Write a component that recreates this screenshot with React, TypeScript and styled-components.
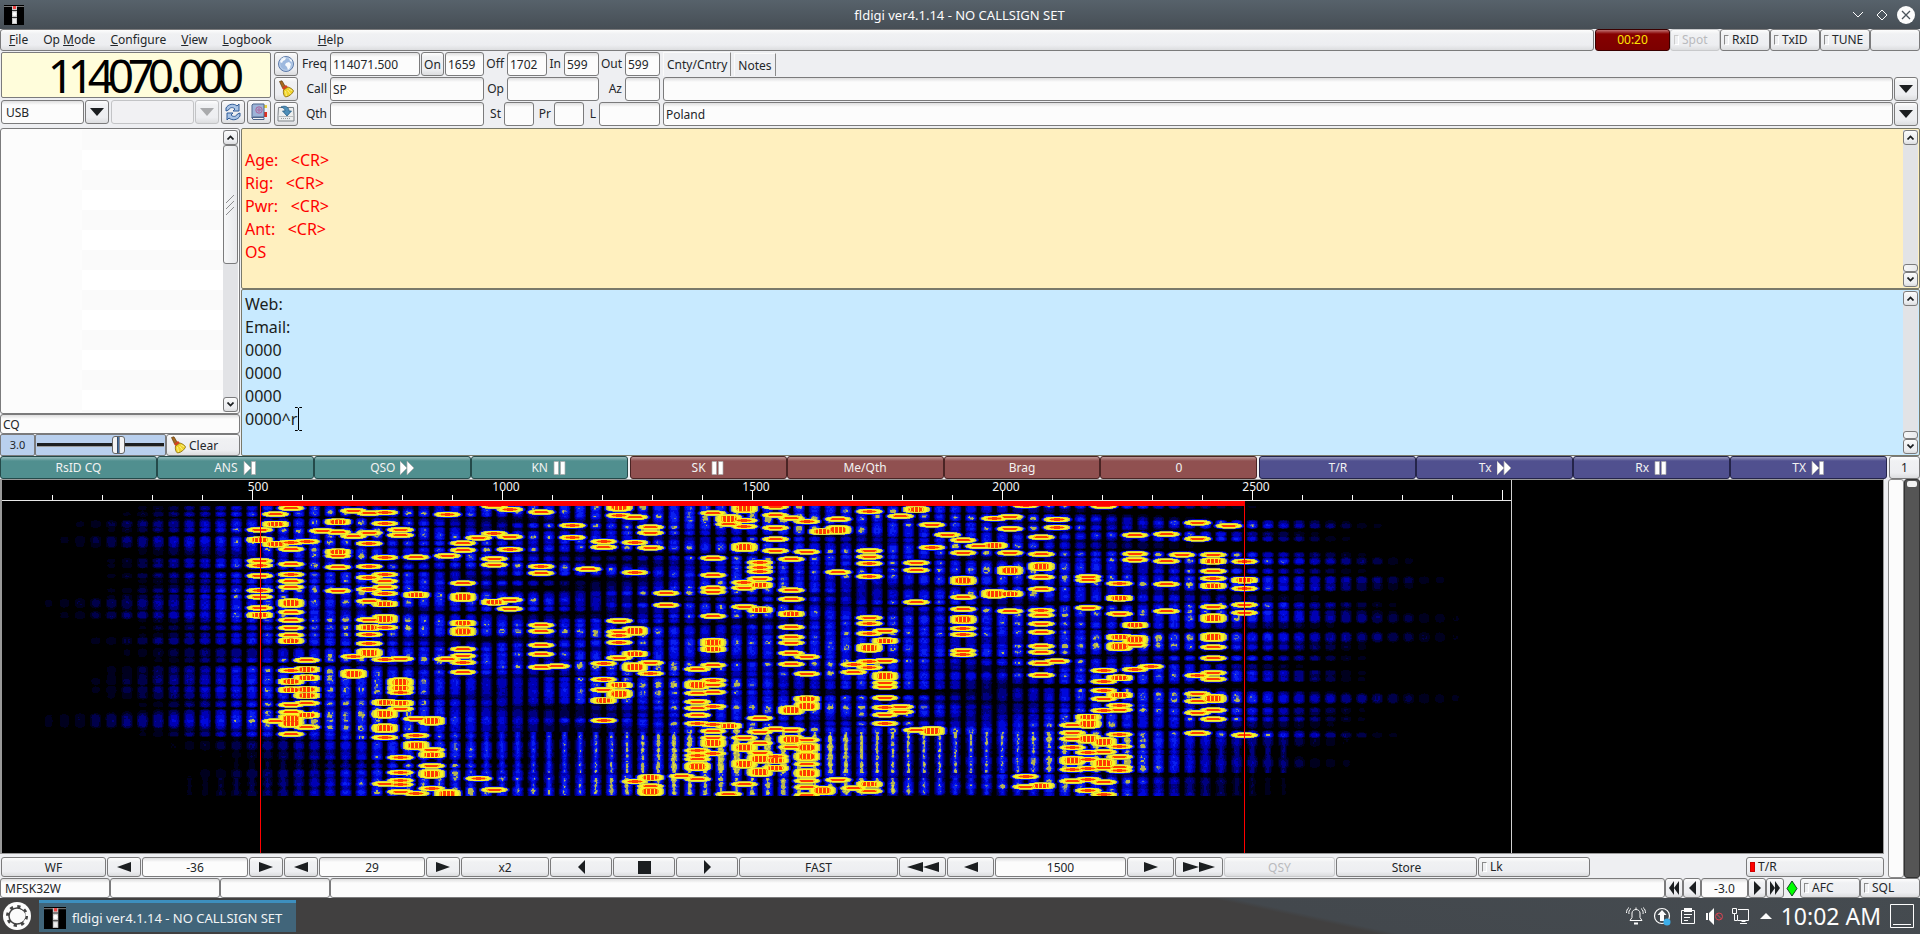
import React from "react";
import styled, { createGlobalStyle, css } from "styled-components";

const Global = createGlobalStyle`
  *, *::before, *::after { box-sizing: border-box; }
  body { margin: 0; background: #eeeff2; }
  body, button, input, select, textarea {
    font-family: "Noto Sans", "Liberation Sans", sans-serif;
    font-size: 12px;
    color: #232629;
  }
`;

/* ---------- shared looks ---------- */

const raised = css`
  border: 1px solid #7b7b7c;
  border-radius: 3px;
  background: linear-gradient(#fdfdfd, #f0f1f3 4px, #edeef1 75%, #dcdddf);
`;
const sunken = css`
  border: 1px solid #7b7b7c;
  border-radius: 3px;
  background: linear-gradient(#dededf, #fcfcfc 4px);
`;

/* ---------- window frame ---------- */

const Page = styled.div`
  display: flex;
  flex-direction: column;
  min-height: 100vh;
`;
const TitleBar = styled.header`
  display: grid;
  grid-template-columns: 1fr auto 1fr;
  align-items: center;
  height: 29px;
  padding: 0 5px 0 4px;
  color: #fcfcfc;
  background: linear-gradient(#57626b, #464e55);
`;
const Title = styled.h1`
  margin: 0;
  font-size: 13px;
  font-weight: 400;
`;
const WindowButtons = styled.div`
  display: flex;
  justify-content: flex-end;
  gap: 6px;
`;
const FrameButton = styled.button`
  display: flex;
  width: 18px;
  height: 18px;
  padding: 0;
  border: 0;
  background: none;
`;

/* ---------- menu ---------- */

const MenuRow = styled.div`
  display: flex;
  height: 22px;
`;
const MenuBar = styled.nav`
  ${raised}
  flex: 1;
  display: flex;
  align-items: center;
  gap: 15px;
  padding: 0 8px;
`;
const MenuItem = styled.button<{ $apart?: boolean }>`
  padding: 0;
  border: 0;
  background: none;
  line-height: 18px;
  margin-left: ${(p) => (p.$apart ? 31 : 0)}px;
`;
const Timer = styled.output`
  width: 75px;
  margin: 0 0 0 1px;
  border: 1px solid #3a0000;
  border-radius: 3px;
  background: linear-gradient(#c07070, #860000 4px, #7c0000);
  color: #ffe500;
  line-height: 20px;
  text-align: center;
`;
const LightLabel = styled.label<{ $width: number; $off?: boolean }>`
  ${raised}
  width: ${(p) => p.$width}px;
  display: flex;
  align-items: center;
  gap: 3px;
  padding: 0 3px;
  line-height: 18px;
  ${(p) => p.$off && css`border-color: #c8c9cb; color: #b9babd;`}
`;
const Light = styled.input`
  appearance: none;
  width: 5px;
  height: 10px;
  margin: 0;
  border: 1px solid #fff;
  border-top-color: #8a8a8a;
  border-left-color: #8a8a8a;
  &:checked { background: #f00; border-color: #c00; }
  &:disabled { border-top-color: #ccc; border-left-color: #ccc; }
`;
const Blank = styled.div`
  ${raised}
  width: 50px;
`;

/* ---------- logging panel ---------- */

const LogPanel = styled.section`
  display: flex;
  gap: 3px;
  height: 77px;
  padding: 1px 2px 0 1px;
`;
const Rig = styled.div`
  display: flex;
  flex-direction: column;
  gap: 2px;
  width: 270px;
`;
const Dial = styled.div`
  display: flex;
  justify-content: flex-end;
  align-items: center;
  height: 46px;
  padding-right: 29px;
  border: 1px solid #7b7b7c;
  border-radius: 2px;
  background: #fffddb;
`;
const Digit = styled.span<{ $point?: boolean }>`
  display: flex;
  justify-content: center;
  width: ${(p) => (p.$point ? 10 : 20)}px;
  font-size: 46px;
  line-height: 44px;
  color: #000;
`;
const RigRow = styled.div`
  display: flex;
  gap: 2px;
  height: 24px;
`;
const Combo = styled.div<{ $grow?: boolean }>`
  display: flex;
  flex: none;
  gap: 1px;
  height: 24px;
  ${(p) => !p.$grow && css`width: 108px;`}
`;
const ComboSelect = styled.select`
  ${sunken}
  appearance: none;
  flex: 1;
  min-width: 0;
  padding: 0 4px;
  &:disabled { background: #f1f1f3; border-color: #c3c4c6; opacity: 1; }
`;
const Square = styled.button`
  ${raised}
  display: flex;
  align-items: center;
  justify-content: center;
  flex: none;
  width: 24px;
  height: 24px;
  padding: 0;
  &:disabled { border-color: #c3c4c6; }
`;
const Tools = styled.div`
  display: flex;
  flex-direction: column;
  gap: 1px;
`;
const Fields = styled.div`
  display: flex;
  flex-direction: column;
  gap: 1px;
  width: 359px;
`;
const FieldRow = styled.div`
  display: flex;
  height: 24px;
`;
const FieldLabel = styled.label<{ $width: number }>`
  width: ${(p) => p.$width}px;
  padding-right: 3px;
  line-height: 24px;
  text-align: right;
`;
const Field = styled.input<{ $width: number }>`
  ${sunken}
  width: ${(p) => p.$width}px;
  height: 24px;
  padding: 0 2px;
`;
const OnButton = styled.button`
  ${raised}
  width: 23px;
  height: 24px;
  margin: 0 1px;
  padding: 0;
`;
const Places = styled.div`
  flex: 1;
  display: flex;
  flex-direction: column;
  gap: 1px;
`;
const Tabs = styled.div`
  display: flex;
  gap: 3px;
  height: 24px;
`;
const Tab = styled.button<{ $active?: boolean }>`
  padding: 0 3px;
  border: 0;
  border-right: 1px solid #8a8a8a;
  border-top: 1px solid #fafafa;
  border-left: 1px solid #fafafa;
  background: #eeeff2;
  margin-top: ${(p) => (p.$active ? 0 : 1)}px;
`;
const GrowInput = styled.input`
  ${sunken}
  flex: 1;
  min-width: 0;
  padding: 0 2px;
`;

/* ---------- text panels ---------- */

const Main = styled.main`
  display: flex;
  height: 328px;
  gap: 1px;
`;
const Side = styled.aside`
  display: flex;
  flex-direction: column;
  width: 240px;
`;
const Browser = styled.div`
  flex: 1;
  display: flex;
  padding: 1px;
  border: 1px solid #7b7b7c;
  border-radius: 3px;
  background: #fcfcfc;
`;
const ChannelKeys = styled.div`
  width: 80px;
`;
const Channels = styled.div`
  flex: 1;
  background: repeating-linear-gradient(#fafafa 0 20px, #fff 20px 40px);
`;
const Bar = styled.div`
  display: flex;
  flex-direction: column;
  width: 15px;
  background: #e2e3e6;
`;
const BarButton = styled.button`
  ${raised}
  display: flex;
  align-items: center;
  justify-content: center;
  height: 15px;
  padding: 0;
`;
const Track = styled.div<{ $end?: boolean }>`
  flex: 1;
  display: flex;
  flex-direction: column;
  justify-content: ${(p) => (p.$end ? "flex-end" : "flex-start")};
`;
const Thumb = styled.div<{ $height: number }>`
  ${raised}
  height: ${(p) => p.$height}px;
  display: flex;
  align-items: center;
  justify-content: center;
  background: linear-gradient(90deg, #f6f7f8, #e8e9ec);
`;
const Search = styled.input`
  ${sunken}
  height: 20px;
  padding: 0 2px;
`;
const SquelchRow = styled.div`
  display: flex;
  height: 22px;
`;
const Squelch = styled.output`
  width: 35px;
  border: 1px solid #7b7b7c;
  border-radius: 2px;
  background: #b9d0ee;
  font-size: 11px;
  line-height: 20px;
  text-align: center;
`;
const SquelchSlider = styled.input`
  appearance: none;
  width: 131px;
  margin: 0;
  padding: 0 1px;
  border: 1px solid #7b7b7c;
  border-radius: 2px;
  background: #b9d0ee;
  &::-webkit-slider-runnable-track {
    height: 4px;
    background: linear-gradient(#1c1e20 3px, #9a9a9a 3px);
  }
  &::-webkit-slider-thumb {
    appearance: none;
    width: 13px;
    height: 18px;
    margin-top: -7px;
    border: 1px solid #666;
    border-radius: 3px;
    background: linear-gradient(90deg, #f4f4f4 4px, #223 4px, #48729f 5px, #48729f 6px, #223 6px, #f4f4f4 7px);
  }
`;
const ClearButton = styled.button`
  ${raised}
  flex: 1;
  display: flex;
  align-items: center;
  gap: 2px;
  padding: 0 2px;
`;
const Panes = styled.div`
  flex: 1;
  display: flex;
  flex-direction: column;
`;
const Pane = styled.div<{ $tx?: boolean }>`
  flex: ${(p) => (p.$tx ? "1" : "none")};
  display: flex;
  height: 161px;
  padding: 1px;
  border: 1px solid #7a7a6a;
  border-radius: 2px;
  background: ${(p) => (p.$tx ? "#c8eaff" : "#fff0bf")};
`;
const PaneText = styled.textarea<{ $tx?: boolean }>`
  flex: 1;
  padding: ${(p) => (p.$tx ? 2 : 19)}px 2px 0;
  border: 0;
  outline: 0;
  resize: none;
  overflow: hidden;
  background: none;
  color: ${(p) => (p.$tx ? "#1b1e20" : "#ff0000")};
  font-size: 16px;
  line-height: 23px;
`;
const PaneBox = styled.div`
  position: relative;
  flex: 1;
  display: flex;
`;
const Caret = styled.svg`
  position: absolute;
  left: 52px;
  top: 116px;
`;

/* ---------- macros ---------- */

const MacroBar = styled.div`
  display: flex;
  gap: 2px;
  height: 23px;
`;
const MacroGroup = styled.div`
  flex: 1;
  display: flex;
`;
const Macro = styled.button<{ $tone: string; $edge: string }>`
  flex: 1;
  display: flex;
  align-items: center;
  justify-content: center;
  gap: 5px;
  padding: 0;
  border: 1px solid ${(p) => p.$edge};
  border-radius: 3px;
  background: linear-gradient(rgba(255, 255, 255, 0.4), rgba(255, 255, 255, 0) 4px), ${(p) => p.$tone};
  color: #f2f2f2;
  line-height: 20px;
`;
const MacroPage = styled.button`
  ${raised}
  width: 31px;
  padding: 0;
`;

/* ---------- waterfall ---------- */

const Lower = styled.section`
  flex: 1;
  display: flex;
`;
const Spectrum = styled.div`
  flex: 1;
  min-width: 0;
  display: flex;
  flex-direction: column;
`;
const Screen = styled.div`
  flex: 1;
  display: flex;
  min-height: 374px;
  margin-right: 4px;
  border: 1px solid #9a9a9a;
  border-width: 1px 1px 1px 2px;
  background: #000;
  overflow: hidden;
`;
const Plot = styled.svg`
  flex: 1;
  display: block;
  min-width: 0;
`;
const Level = styled.div`
  width: 16px;
  border: 1px solid #8a8a8a;
  border-radius: 3px;
  background: #fcfcfc;
`;
const Gain = styled.div`
  width: 16px;
  padding: 1px 2px;
  border: 1px solid #333;
  border-radius: 3px;
  background: #555;
`;
const GainThumb = styled.div`
  height: 6px;
  border-radius: 2px;
  background: #f2f2f2;
`;
const Controls = styled.div`
  display: flex;
  gap: 1px;
  height: 24px;
  padding: 3px 4px 1px 1px;
`;
const Ctl = styled.button<{ $width: number }>`
  ${raised}
  display: flex;
  align-items: center;
  justify-content: center;
  width: ${(p) => p.$width}px;
  padding: 0;
  &:disabled { border-color: #c8c9cb; color: #b9babd; }
`;
const Counter = styled.input<{ $width: number }>`
  ${sunken}
  width: ${(p) => p.$width}px;
  padding: 0;
  text-align: center;
`;
const Spacer = styled.div`
  flex: 1;
`;
const StatusBar = styled.footer`
  display: flex;
  height: 20px;
`;
const Status = styled.div<{ $grow?: boolean }>`
  ${sunken}
  width: 110px;
  ${(p) => p.$grow && css`flex: 1;`}
  padding: 0 4px;
  line-height: 20px;
`;
const Lamp = styled.svg`
  margin: 0 1px;
`;

/* ---------- desktop panel ---------- */

const Taskbar = styled.div`
  display: flex;
  align-items: center;
  height: 36px;
  padding: 0 6px 0 3px;
  color: #fcfcfc;
  background: linear-gradient(12deg, #414040 0 66%, #43484d 67%, #454b50);
`;
const Launcher = styled.button`
  display: flex;
  padding: 0;
  margin-right: 8px;
  border: 0;
  background: none;
`;
const Task = styled.button`
  display: flex;
  align-items: center;
  gap: 6px;
  width: 257px;
  height: 32px;
  padding: 0 5px;
  border: 0;
  border-top: 3px solid #3d8fbf;
  background: #41657a;
  color: #f2f4f5;
  font-size: 13px;
`;
const Tray = styled.div`
  display: flex;
  align-items: center;
  gap: 4px;
`;
const Clock = styled.time`
  margin: 0 9px 0 4px;
  font-size: 23px;
  line-height: 32px;
  white-space: nowrap;
`;

/* ---------- signal data ---------- */

const TONE = 15.63;
const FIRST_TONE = 257.3;

/* Per tone: burst positions down the waterfall, in thirds of a row. s = strong, b = broad. */
const BURSTS = [
  "118 148s 211 225 256 300 319 352 374s",
  "71 101s 161s 692",
  "53 156 176 221 252 272 290 338b 365 389 412 434 451s 540 573s 598s 643 665 684b 698b 731",
  "153 509 537s 562s 597s 615s 638 674s 710",
  "121",
  "94s 125 184s 196 230 301",
  "61 137 498 550b",
  "68 127 159 228 261 297 332 388 411s 432 459 487b",
  "66 99 201 252 272 290 309 340s 385b 411 507 636s 670b 713b 741 880",
  "118 134 505 575b 593s 606 638s 655 801 846 870 882 904",
  "200 313s 685 735 765b 909",
  "691b 778 793s 826 850b 894",
  "72 196 506 910b",
  "158 179 278 320b 398s 423b 476 496 516 545",
  "142 864",
  "47 129 205 223 335s 898",
  "57 139 177 328 355",
  "",
  "65 228 248 404 422 464 491 530",
  "527",
  "105 141",
  "236",
  "153 170 519 567 598 630s 690",
  "49b 75 391 424 435 456 502 584s 610b",
  "80 156 246 421b 490s 530b 873",
  "110 127 172 517 549 861s 887 903b",
  "308 344",
  "857",
  "536 583b 608 634 653 674 699 780 795 806 828b 866",
  "68 203 254 293 304 377 456b 476s 524 570 583 605 648 702 722 742 757b 789",
  "85b 101 706s 911",
  "54b 90 108 170b 276 292 349 742 771b 820b 881",
  "216 231 243 265 284s 358s 683 724 758 787 805b 845b",
  "49 74 112 146 181 716 798 810s 833s",
  "83 206 299 326 370s 410 440 457 488 521 659b 718 747b 770",
  "93 184 499 550 625s 647b 748 771b 798b 821 848b 871 890 914",
  "123s 900b",
  "86 118b 245 868",
  "522 545 893",
  "63 181 199 219 258 382 399 429 472b 513 531 881s 902",
  "421 451s 511 557b 577 589 622 651 673 699",
  "77 649 664",
  "57s 217 239 335 719",
  "103 171 721b",
  "133",
  "149 187 270b 320 356 387b 414 432 481 492",
  "167",
  "84 165s 310b",
  "79 115 187 240b 310s 362",
  "45 858 889",
  "140 191 228b 260 296 360 374 400 425 467 485 518 554 886s",
  "87 111 512",
  "704 727 745 771 810b 837 872",
  "259 269 352 680s 700b 745b 786 807 834 867 900",
  "47 540 573 600 625 660 754b 784 818b 832 875 912",
  "279 323s 370 440s 468b 562s 614s 645 658 732 768 799 830 840",
  "134 190 208 404s 447b 463 537",
  "528",
  "131 212 281 362",
  "193",
  "97 145 555 610 632 667 728",
  "193 212s 242 264 286s 349 383b 440b 470 503 547 566 624b 659 686",
  "106",
  "213 269s 294 343 367 734",
];

const PALETTE: [number, string][] = [
  [0.07, "#00001e"],
  [0.14, "#00004a"],
  [0.22, "#000080"],
  [0.31, "#0000b4"],
  [0.4, "#0008dc"],
  [0.49, "#0a20f0"],
  [0.565, "#5f6aa8"],
  [0.59, "#b4b452"],
  [0.67, "#d6d648"],
  [0.76, "#f8f424"],
  [0.91, "#ffa814"],
  [0.945, "#ff3c00"],
];

const COLS = 1505;
const ROWS = 306;
const TOP_ROW = 16;
const MIX = 5;

/* repeatable grain, 0..1 */
const grain = (a: number, b: number) => {
  const s = Math.sin(a * 12.9898 + b * 78.233) * 43758.5453;
  return s - Math.floor(s);
};

function tracePaths(): string[] {
  const main = new Float32Array(COLS * ROWS);
  const side = new Float32Array(COLS * ROWS);
  BURSTS.forEach((line, tone) => {
    const cx = FIRST_TONE + tone * TONE;
    line.split(" ").filter(Boolean).forEach((word) => {
      const at = parseInt(word, 10);
      const cy = at / 3;
      const kind = word.endsWith("b") ? 2 : word.endsWith("s") ? 1 : 0;
      const h = [2.8, 3.4, 4.8][kind];
      const hs = [3.6, 5, 6.4][kind];
      const lobes = [11, 15, 18][kind];
      const reach = lobes * TONE;
      for (let y = Math.max(0, Math.floor(cy - 9)); y < Math.min(ROWS, cy + 9); y++) {
        const dy = Math.abs(y - cy);
        for (let x = Math.max(0, Math.floor(cx - reach)); x < Math.min(COLS, cx + reach); x++) {
          const u = Math.abs(x - cx) / TONE;
          const i = y * COLS + x;
          if (u < 1) {
            const r = Math.pow(u / 0.85, 3) + Math.pow(dy / h, kind ? 4 : 2);
            let v = r < 1 ? 1 - 0.4 * r : 0.6 - 0.6 * (r - 1);
            if (kind && v > 0.94 && x % 4 === 0) v = 0.86;
            if (v > main[i]) main[i] = v;
          } else {
            const k = Math.floor(u);
            const f = Math.abs(u - k - 0.5) / 0.42;
            const d = dy / (hs * (1 - 0.3 * f));
            if (f >= 1 || d >= 1) continue;
            const peak = [0.66, 0.68, 0.7][kind] * Math.pow(1 - k / lobes, 1.15) * (0.88 + 0.16 * grain(at, k));
            const hollow = kind ? 0.14 * (1 - f) * (1 - d) : 0;
            side[i] += Math.pow(peak * (1 - f * f * f - hollow) * (1 - d * d * d), MIX);
          }
        }
      }
    });
  });
  /* keying transients: thin vertical lines between tones */
  for (let k = -6; k < 66; k++) {
    const cx = FIRST_TONE + (k + 0.5) * TONE;
    for (let y = 242; y < ROWS - 1; y++) {
      const late = y > 282;
      const far = Math.abs(k - (late ? 30 : 34)) / (late ? 38 : 39);
      if (far >= 1) continue;
      const pulse = 0.04 * Math.sin(y * 0.9) - (y > 266 && y < 271 ? 0.08 : 0) - (late ? (y < 288 ? 0.3 : 0.04) : 0);
      for (let x = Math.round(cx) - 3; x <= Math.round(cx) + 3; x++) {
        if (x < 0 || x >= COLS) continue;
        const dx = Math.abs(x - cx) / 4;
        const v = (0.65 + pulse) * (1 - far * far) * (1 - dx * dx);
        if (v > 0) side[y * COLS + x] += Math.pow(v, MIX);
      }
    }
  }
  const out: string[][] = PALETTE.map(() => []);
  const rank = (i: number, x: number, y: number) => {
    const raw = Math.min(0.7, Math.pow(side[i], 1 / MIX));
    const speckled = raw * (0.9 + 0.14 * grain(x >> 1, y >> 1));
    const v = Math.max(main[i], speckled);
    let n = -1;
    while (n + 1 < PALETTE.length && v >= PALETTE[n + 1][0]) n++;
    return n;
  };
  for (let y = TOP_ROW; y < ROWS; y++) {
    let start = 0;
    let last = -1;
    for (let x = 0; x <= COLS; x++) {
      const n = x < COLS ? rank(y * COLS + x, x, y) : -1;
      if (n !== last) {
        if (last >= 0) out[last].push(`M${start} ${y}h${x - start}v1h${start - x}z`);
        start = x;
        last = n;
      }
    }
  }
  return out.map((part) => part.join(""));
}

const TRACES = tracePaths();
const TICKS = Array.from({ length: 30 }, (_, i) => i + 1);

function Waterfall() {
  return (
    <Plot role="img" aria-label="Waterfall">
      <g transform="translate(0 10)" shapeRendering="crispEdges">
        {TRACES.map((d, i) => (
          <path key={i} d={d} fill={PALETTE[i][1]} />
        ))}
      </g>
      <g shapeRendering="crispEdges">
        {TICKS.map((t) => (
          <rect key={t} x={t * 50} y={t % 5 ? 15 : 10} width="1" height={t % 5 ? 5 : 10} fill="#fff" />
        ))}
        <rect x="0" y="20" width="1509" height="1" fill="#e8e8e8" />
        <rect x="1509" y="0" width="1" height="100%" fill="#d0d0d0" />
        <rect x="258" y="21" width="984" height="5" fill="#f00" />
        <rect x="258" y="21" width="1" height="100%" fill="#f00" />
        <rect x="1242" y="21" width="1" height="100%" fill="#f00" />
      </g>
      {[500, 1000, 1500, 2000, 2500].map((f) => (
        <text key={f} x={f / 2 + (f > 500 ? 4 : 6)} y="11" fill="#f4f4f4" fontSize="12" textAnchor="middle">
          {f}
        </text>
      ))}
    </Plot>
  );
}

/* ---------- icons ---------- */

const AppIcon = ({ size }: { size: number }) => (
  <svg width={size} height={size} viewBox="0 0 20 20">
    <rect width="20" height="20" fill="#000" />
    <path d="M0 1.5h20" stroke="#777" />
    <rect x="8" y="1" width="5" height="18" fill="#c9c9c9" />
    <rect x="9" y="1" width="3" height="3" fill="#e44" />
    <path d="M8 5.500h5M8 12.500h5" stroke="#333" />
    <circle cx="10.500" cy="9" r="2" fill="#fff" />
    <rect x="9" y="14" width="3" height="4" fill="#eee" />
  </svg>
);

const Triangle = ({ dim }: { dim?: boolean }) => (
  <svg width="14" height="8" viewBox="0 0 14 8">
    <path d="M0 0h14L7 8z" fill={dim ? "#a9aaac" : "#1b1e20"} />
  </svg>
);

const Chevron = ({ up }: { up?: boolean }) => (
  <svg width="7" height="5" viewBox="0 0 7 5">
    <path d={up ? "M.5 4.500L3.500 1.500l3 3" : "M.5.5l3 3 3-3"} fill="none" stroke="#1b1e20" strokeWidth="1.700" />
  </svg>
);

const Broom = () => (
  <svg width="18" height="18" viewBox="0 0 18 18">
    <path d="M2.500 1.500L5 .8 8 6 5.500 8z" fill="#a86a20" stroke="#5f3c10" strokeWidth=".7" />
    <path d="M5 8l4-3 2 2L6.500 10z" fill="#d8401c" />
    <path d="M6.500 10L11 7c3 1 5 2.500 5.500 4-1 2.500-4 5.500-8 6-2-1.500-2.500-4-2-7z" fill="#f0d428" stroke="#84650a" strokeWidth=".8" />
    <path d="M8.500 11l1 5M10.500 10l3 4M12 9l3.500 2" stroke="#fff8b0" strokeWidth=".7" />
  </svg>
);

const Globe = () => (
  <svg width="18" height="18" viewBox="0 0 18 18">
    <circle cx="9" cy="9" r="7.500" fill="#9db9df" stroke="#5f7caa" />
    <path d="M4 4c2-2 4-2 5-1l-1 2-2 1-1 2-2-1zM9 8l3-1 2 2-1 4-2 2-1-3-2-2zM12 3l3 2v2l-2-1z" fill="#f7fafd" />
    <circle cx="9" cy="9" r="6.300" fill="none" stroke="#d4e2f4" strokeWidth=".6" />
  </svg>
);

const Download = () => (
  <svg width="18" height="18" viewBox="0 0 18 18">
    <path d="M1.500 2.500h15l.5 8v5.500H1v-5.500z" fill="#eceeee" stroke="#7d8287" />
    <path d="M2 11.500h14" stroke="#b8babc" />
    <path d="M4 13.500h9" stroke="#9a9c9e" strokeDasharray="1 1" />
    <path d="M4 2c4-2 8 0 8 4h2.500L10 11 5.500 6H8c0-2-1-3-4-4z" fill="#4f8fb8" stroke="#235d86" strokeWidth=".8" />
  </svg>
);

const Refresh = () => (
  <svg width="18" height="18" viewBox="0 0 18 18">
    <path d="M2 8V5c2-4 8-5 11-2l2-2v7H9l2-2C9 4 6 4 4.500 7z" fill="#a9c4e6" stroke="#2f5b96" />
    <path d="M16 10v3c-2 4-8 5-11 2l-2 2v-7h6l-2 2c2 2 5 2 6.500-1z" fill="#a9c4e6" stroke="#2f5b96" />
  </svg>
);

const Book = () => (
  <svg width="18" height="18" viewBox="0 0 18 18">
    <path d="M14 2h3v3h-3z" fill="#e8d040" />
    <path d="M14 5h3v4h-3z" fill="#f4f4f4" />
    <path d="M14 9h3v5h-3z" fill="#e03020" />
    <path d="M3 1h11v13H3l-1 1v-13z" fill="#9db4d8" stroke="#4e668c" />
    <path d="M2 14.500h12v2H3z" fill="#f2f2f2" stroke="#4e668c" />
    <circle cx="9" cy="7" r="3.200" fill="none" stroke="#b0609a" />
    <circle cx="9" cy="7" r="1.200" fill="none" stroke="#b0609a" />
  </svg>
);

const MacroIcon = ({ kind }: { kind: string }) => (
  <svg width="14" height="14" viewBox="0 0 14 14" fill="#fff" stroke="#a8a8a8" strokeWidth=".7">
    {kind === "next" && <path d="M1 0l7 7-7 7zM8.500.5h4v13h-4z" />}
    {kind === "fast" && <path d="M0 0l7 7-7 7zM7 0l7 7-7 7z" />}
    {kind === "pause" && <path d="M1 .5h4.500v13H1zM7.500.5H12v13H7.500z" />}
  </svg>
);

const Arrow = ({ left, two, slim }: { left?: boolean; two?: boolean; slim?: boolean }) => {
  const w = slim ? (two ? 5 : 7) : two ? 16 : 14;
  const h = slim ? 14 : 10;
  const d = left ? `M${w} 0v${h}L0 ${h / 2}z` : `M0 0v${h}l${w}-${h / 2}z`;
  return (
    <svg width={two ? w * 2 : w} height={h} fill="#1b1e20">
      <path d={d} />
      {two && <path d={d} transform={`translate(${w})`} />}
    </svg>
  );
};

/* ---------- pieces ---------- */

const ScrollBar = ({ thumb, end, grip }: { thumb: number; end?: boolean; grip?: boolean }) => (
  <Bar>
    <BarButton aria-label="Scroll up"><Chevron up /></BarButton>
    <Track $end={end}>
      <Thumb $height={thumb}>
        {grip && (
          <svg width="9" height="20" viewBox="0 0 9 20">
            <path d="M0 8l8-8M0 14l8-8M0 20l8-8" stroke="#8d8d8f" />
          </svg>
        )}
      </Thumb>
    </Track>
    <BarButton aria-label="Scroll down"><Chevron /></BarButton>
  </Bar>
);

const Entry = ({ name, label, pre, width, value = "" }: { name: string; label: string; pre: number; width: number; value?: string }) => (
  <>
    <FieldLabel htmlFor={name} $width={pre}>{label}</FieldLabel>
    <Field id={name} $width={width} defaultValue={value} />
  </>
);

const Toggle = ({ label, width, on, off }: { label: string; width: number; on?: boolean; off?: boolean }) => (
  <LightLabel $width={width} $off={off}>
    <Light type="checkbox" defaultChecked={on} disabled={off} />
    {label}
  </LightLabel>
);

const MACROS = [
  { tone: "#508f8f", edge: "#244a4a", items: [["RsID CQ", ""], ["ANS", "next"], ["QSO", "fast"], ["KN", "pause"]] },
  { tone: "#905050", edge: "#4a2424", items: [["SK", "pause"], ["Me/Qth", ""], ["Brag", ""], ["0", ""]] },
  { tone: "#50508f", edge: "#24244a", items: [["T/R", ""], ["Tx", "fast"], ["Rx", "pause"], ["TX", "next"]] },
];

const RX_TEXT = "Age:   <CR>\nRig:   <CR>\nPwr:   <CR>\nAnt:   <CR>\nOS";
const TX_TEXT = "Web:\nEmail:\n0000\n0000\n0000\n0000^r";

export default function App() {
  return (
    <Page>
      <Global />
      <TitleBar>
        <AppIcon size={20} />
        <Title>fldigi ver4.1.14 - NO CALLSIGN SET</Title>
        <WindowButtons>
          <FrameButton aria-label="Minimize">
            <svg width="18" height="18"><path d="M4 6l5 5 5-5" fill="none" stroke="#fcfcfc" /></svg>
          </FrameButton>
          <FrameButton aria-label="Maximize">
            <svg width="18" height="18"><path d="M9 4l5 5-5 5-5-5z" fill="none" stroke="#fcfcfc" /></svg>
          </FrameButton>
          <FrameButton aria-label="Close">
            <svg width="18" height="18">
              <circle cx="9" cy="9" r="9" fill="#fcfcfc" />
              <path d="M5 5l8 8M13 5l-8 8" stroke="#4b545b" strokeWidth="1.300" />
            </svg>
          </FrameButton>
        </WindowButtons>
      </TitleBar>

      <MenuRow>
        <MenuBar>
          <MenuItem><u>F</u>ile</MenuItem>
          <MenuItem>Op <u>M</u>ode</MenuItem>
          <MenuItem><u>C</u>onfigure</MenuItem>
          <MenuItem><u>V</u>iew</MenuItem>
          <MenuItem><u>L</u>ogbook</MenuItem>
          <MenuItem $apart><u>H</u>elp</MenuItem>
        </MenuBar>
        <Timer>00:20</Timer>
        <Toggle label="Spot" width={50} off />
        <Toggle label="RxID" width={50} />
        <Toggle label="TxID" width={50} />
        <Toggle label="TUNE" width={50} />
        <Blank />
      </MenuRow>

      <LogPanel>
        <Rig>
          <Dial>
            {"114070.000".split("").map((c, i) => (
              <Digit key={i} $point={c === "."}>{c}</Digit>
            ))}
          </Dial>
          <RigRow>
            <Combo>
              <ComboSelect aria-label="Sideband"><option>USB</option></ComboSelect>
              <Square aria-label="Choose sideband"><Triangle /></Square>
            </Combo>
            <Combo>
              <ComboSelect aria-label="Bandwidth" disabled />
              <Square aria-label="Choose bandwidth" disabled><Triangle dim /></Square>
            </Combo>
            <Square aria-label="Refresh"><Refresh /></Square>
            <Square aria-label="Logbook"><Book /></Square>
          </RigRow>
        </Rig>
        <Tools>
          <Square aria-label="Look up"><Globe /></Square>
          <Square aria-label="Clear fields"><Broom /></Square>
          <Square aria-label="Save"><Download /></Square>
        </Tools>
        <Fields>
          <FieldRow>
            <Entry name="freq" label="Freq" pre={29} width={90} value="114071.500" />
            <OnButton>On</OnButton>
            <Field $width={39} aria-label="On" defaultValue="1659" />
            <Entry name="off" label="Off" pre={23} width={40} value="1702" />
            <Entry name="in" label="In" pre={17} width={35} value="599" />
            <Entry name="out" label="Out" pre={26} width={35} value="599" />
          </FieldRow>
          <FieldRow>
            <Entry name="call" label="Call" pre={29} width={154} value="SP" />
            <Entry name="op" label="Op" pre={23} width={92} />
            <Entry name="az" label="Az" pre={26} width={35} />
          </FieldRow>
          <FieldRow>
            <Entry name="qth" label="Qth" pre={29} width={154} />
            <Entry name="st" label="St" pre={20} width={30} />
            <Entry name="pr" label="Pr" pre={20} width={30} />
            <Entry name="loc" label="L" pre={15} width={61} />
          </FieldRow>
        </Fields>
        <Places>
          <Tabs>
            <Tab $active>Cnty/Cntry</Tab>
            <Tab>Notes</Tab>
          </Tabs>
          <Combo $grow>
            <GrowInput aria-label="County" />
            <Square aria-label="Choose county"><Triangle /></Square>
          </Combo>
          <Combo $grow>
            <GrowInput aria-label="Country" defaultValue="Poland" />
            <Square aria-label="Choose country"><Triangle /></Square>
          </Combo>
        </Places>
      </LogPanel>

      <Main>
        <Side>
          <Browser>
            <ChannelKeys />
            <Channels />
            <ScrollBar thumb={119} grip />
          </Browser>
          <Search aria-label="Search" defaultValue="CQ" />
          <SquelchRow>
            <Squelch>3.0</Squelch>
            <SquelchSlider type="range" aria-label="Squelch" min="0" max="100" defaultValue="66" />
            <ClearButton><Broom />Clear</ClearButton>
          </SquelchRow>
        </Side>
        <Panes>
          <Pane>
            <PaneText aria-label="Received text" readOnly value={RX_TEXT} />
            <ScrollBar thumb={8} end />
          </Pane>
          <Pane $tx>
            <PaneBox>
              <PaneText $tx aria-label="Transmit text" defaultValue={TX_TEXT} />
              <Caret width="7" height="24">
                <path d="M0 .5h2.500l1 1 1-1H7M0 23.500h2.500l1-1 1 1H7M3.500 1v22" fill="none" stroke="#000" />
              </Caret>
            </PaneBox>
            <ScrollBar thumb={8} end />
          </Pane>
        </Panes>
      </Main>

      <MacroBar>
        {MACROS.map((g) => (
          <MacroGroup key={g.tone}>
            {g.items.map(([text, icon]) => (
              <Macro key={text} $tone={g.tone} $edge={g.edge}>
                {text}
                {icon && <MacroIcon kind={icon} />}
              </Macro>
            ))}
          </MacroGroup>
        ))}
        <MacroPage>1</MacroPage>
      </MacroBar>

      <Lower>
        <Spectrum>
          <Screen><Waterfall /></Screen>
          <Controls>
            <Ctl $width={105}>WF</Ctl>
            <Ctl $width={34} aria-label="Lower reference"><Arrow left /></Ctl>
            <Counter $width={106} aria-label="Reference level" defaultValue="-36" />
            <Ctl $width={34} aria-label="Raise reference"><Arrow /></Ctl>
            <Ctl $width={34} aria-label="Lower range"><Arrow left /></Ctl>
            <Counter $width={106} aria-label="Range" defaultValue="29" />
            <Ctl $width={34} aria-label="Raise range"><Arrow /></Ctl>
            <Ctl $width={88}>x2</Ctl>
            <Ctl $width={62} aria-label="Shift left"><Arrow left slim /></Ctl>
            <Ctl $width={62} aria-label="Centre">
              <svg width="13" height="13"><path d="M0 0h13v13H0z" fill="#1b1e20" /></svg>
            </Ctl>
            <Ctl $width={62} aria-label="Shift right"><Arrow slim /></Ctl>
            <Ctl $width={159}>FAST</Ctl>
            <Ctl $width={47} aria-label="Step down fast"><Arrow left two /></Ctl>
            <Ctl $width={47} aria-label="Step down"><Arrow left /></Ctl>
            <Counter $width={131} aria-label="Carrier" defaultValue="1500" />
            <Ctl $width={47} aria-label="Step up"><Arrow /></Ctl>
            <Ctl $width={48} aria-label="Step up fast"><Arrow two /></Ctl>
            <Ctl $width={111} disabled>QSY</Ctl>
            <Ctl $width={141}>Store</Ctl>
            <Toggle label="Lk" width={112} />
            <Spacer />
            <Toggle label="T/R" width={138} on />
          </Controls>
        </Spectrum>
        <Level />
        <Gain><GainThumb /></Gain>
      </Lower>

      <StatusBar>
        <Status>MFSK32W</Status>
        <Status />
        <Status />
        <Status $grow />
        <Ctl $width={18} aria-label="Squelch down fast"><Arrow left two slim /></Ctl>
        <Ctl $width={18} aria-label="Squelch down"><Arrow left slim /></Ctl>
        <Counter $width={47} aria-label="Transmit level" defaultValue="-3.0" />
        <Ctl $width={18} aria-label="Squelch up"><Arrow slim /></Ctl>
        <Ctl $width={18} aria-label="Squelch up fast"><Arrow two slim /></Ctl>
        <Lamp width="14" height="20"><path d="M7 3l5 7.500L7 18l-5-7.500z" fill="#0f0" stroke="#142" /></Lamp>
        <Toggle label="AFC" width={60} />
        <Toggle label="SQL" width={60} />
      </StatusBar>

      <Taskbar>
        <Launcher aria-label="Application launcher">
          <svg width="28" height="28" viewBox="0 0 28 28">
            <circle cx="14" cy="14" r="14" fill="#fcfcfc" />
            <circle cx="14" cy="14" r="8" fill="none" stroke="#444" strokeWidth="1.500" />
            <circle cx="14" cy="14" r="9.500" fill="none" stroke="#444" strokeWidth="3" strokeDasharray="3.200 4.260" />
            <circle cx="16" cy="14" r="6.500" fill="#fcfcfc" />
          </svg>
        </Launcher>
        <Task><AppIcon size={22} />fldigi ver4.1.14 - NO CALLSIGN SET</Task>
        <Spacer />
        <Tray>
          <svg width="22" height="22" viewBox="0 0 22 22" fill="none" stroke="#fcfcfc">
            <path d="M5 15.500h12l-2-3V8c0-2-2-3.500-4-3.500S7 6 7 8v4.500zM11 4V2.500M4 9c-.5-2 0-4 2-5.500M18 9c.5-2 0-4-2-5.500M1.500 8c0-2 .5-4 2.500-5.500M20.500 8c0-2-.5-4-2.500-5.500" />
            <path d="M9 18.500h4" strokeWidth="2" />
          </svg>
          <svg width="22" height="22" viewBox="0 0 22 22">
            <circle cx="11" cy="11" r="7.500" fill="none" stroke="#fcfcfc" strokeWidth="1.200" />
            <path d="M11 5l4.500 5H13v6H9v-6H6.500z" fill="#fcfcfc" />
            <circle cx="16" cy="17" r="3.500" fill="#3daee9" />
          </svg>
          <svg width="22" height="22" viewBox="0 0 22 22">
            <path d="M4.500 5.500h13v13h-13zM7 9.500h8M7 12.500h6M7 15.500h4" fill="none" stroke="#fcfcfc" />
            <path d="M7 3h8v4H7z" fill="#fcfcfc" />
          </svg>
          <svg width="22" height="22" viewBox="0 0 22 22">
            <path d="M3 8h2v7H3zM6 8l5-5v17l-5-5z" fill="#fcfcfc" />
            <circle cx="16" cy="11.500" r="3.500" fill="none" stroke="#da4453" />
            <path d="M13.500 9l5 5" stroke="#da4453" />
          </svg>
          <svg width="22" height="22" viewBox="0 0 22 22" fill="none" stroke="#fcfcfc">
            <path d="M3.500 3.500h4v5h-4zM5.500 9v6.500H8M9 4.500h10.500v11H8.500V10M11 18.500h7M12.500 16.500h4" />
          </svg>
          <svg width="22" height="22" viewBox="0 0 22 22"><path d="M5 14l6-6 6 6z" fill="#fcfcfc" /></svg>
        </Tray>
        <Clock>10:02 AM</Clock>
        <svg width="24" height="24"><path d="M.5.5h23v23H.5zM3 20.500h18" fill="none" stroke="#fcfcfc" /></svg>
      </Taskbar>
    </Page>
  );
}
